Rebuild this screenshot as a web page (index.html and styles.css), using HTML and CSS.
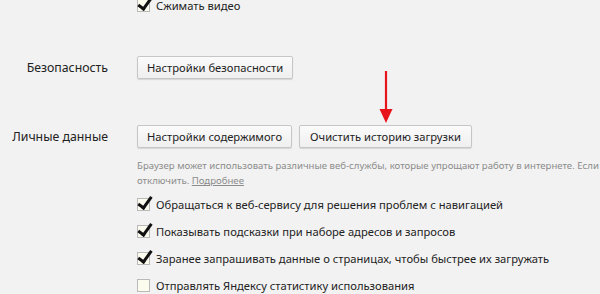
FILE: index.html
```html
<!DOCTYPE html>
<html lang="ru">
<head>
    <meta charset="UTF-8">
    <meta name="viewport" content="width=device-width, initial-scale=1.0">
    <title>Настройки</title>
    <link rel="stylesheet" href="styles.css">
</head>
<body>
    <div class="settings">
        <div class="row row-top">
            <div class="label"></div>
            <div class="content">
                <label class="check"><span class="box checked"></span>Сжимать видео</label>
            </div>
        </div>

        <div class="row row-security">
            <div class="label">Безопасность</div>
            <div class="content">
                <button class="btn">Настройки безопасности</button>
            </div>
        </div>

        <div class="row row-personal">
            <div class="label">Личные данные</div>
            <div class="content">
                <div class="buttons">
                    <button class="btn">Настройки содержимого</button>
                    <button class="btn btn-clear">Очистить историю загрузки
                        <svg class="arrow" width="14" height="54" viewBox="0 0 14 54">
                            <line x1="7" y1="0" x2="7" y2="42" stroke="#e8141b" stroke-width="2.2"/>
                            <polygon points="0.5,38 13.5,38 7,52" fill="#e8141b"/>
                        </svg>
                    </button>
                </div>
                <p class="note">Браузер может использовать различные веб-службы, которые упрощают работу в интернете. Если<br>отключить. <a href="#">Подробнее</a></p>
                <label class="check"><span class="box checked"></span>Обращаться к веб-сервису для решения проблем с навигацией</label>
                <label class="check"><span class="box checked"></span>Показывать подсказки при наборе адресов и запросов</label>
                <label class="check"><span class="box checked"></span>Заранее запрашивать данные о страницах, чтобы быстрее их загружать</label>
                <label class="check"><span class="box"></span>Отправлять Яндексу статистику использования</label>
            </div>
        </div>
    </div>
</body>
</html>
```

FILE: styles.css
```css
html, body {
    margin: 0;
    height: 100%;
    overflow: hidden;
}
body {
    background-color: #f2f2f2;
    font-family: "Noto Sans", "Open Sans", sans-serif;
    font-size: 11.2px;
    color: #222;
}
.settings {
    margin-top: -7px;
}
.row {
    display: grid;
    grid-template-columns: 108px 1fr;
    column-gap: 29px;
    align-items: start;
}
.row-security {
    margin-top: 39px;
}
.row-personal {
    margin-top: 46px;
}
.label {
    text-align: right;
    font-size: 12.3px;
    line-height: 23px;
    white-space: nowrap;
}
.content {
    white-space: nowrap;
}
.buttons {
    display: flex;
    gap: 7px;
}
.btn {
    position: relative;
    height: 23px;
    padding: 0 9px;
    font-family: inherit;
    font-size: 11.2px;
    color: #222;
    background: linear-gradient(#fbfbfb, #efefef);
    border: 1px solid #c6c6c6;
    border-radius: 2px;
    box-shadow: 0 1px 1px rgba(0, 0, 0, 0.12);
}
.btn-clear {
    padding: 0 10px;
}
.arrow {
    position: absolute;
    left: 79px;
    top: -55px;
}
.note {
    margin: 10px 0 0;
    font-size: 9.6px;
    line-height: 15px;
    color: #8c8c8c;
}
.note a {
    color: #8c8c8c;
}
.check {
    display: flex;
    align-items: center;
    height: 27px;
}
.note + .check {
    margin-top: 3px;
}
.row-top .check {
    height: 24px;
}
.box {
    position: relative;
    flex: none;
    width: 11px;
    height: 11px;
    margin-right: 6px;
    border: 1px solid #b9b9b9;
    background: #fbfbee;
}
.box.checked::after {
    content: "";
    position: absolute;
    left: 3px;
    top: -5px;
    width: 5px;
    height: 12px;
    border-right: 3px solid #111;
    border-bottom: 3px solid #111;
    transform: rotate(36deg);
}
```
